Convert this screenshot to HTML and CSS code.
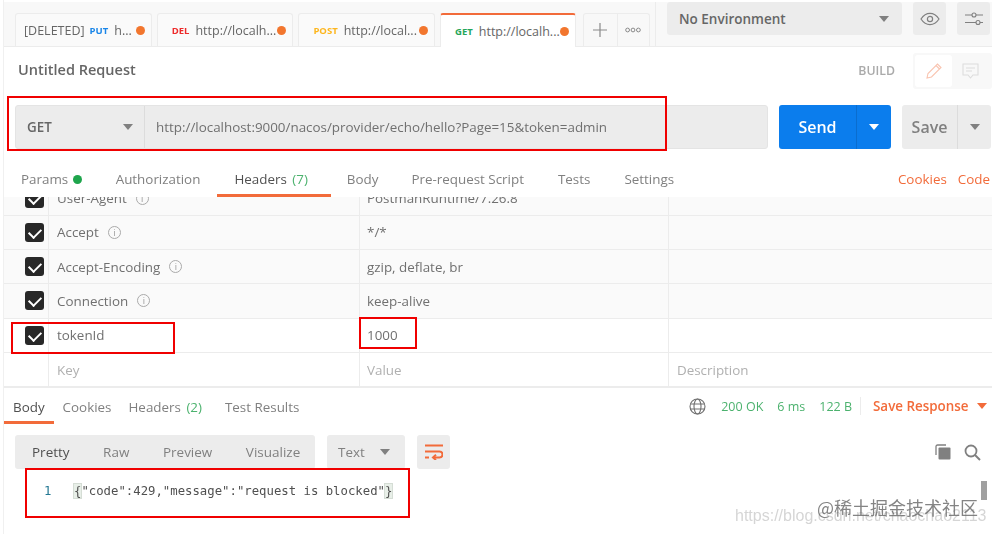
FILE: index.html
```html
<!DOCTYPE html>
<html lang="en">
<head>
    <meta charset="UTF-8" />
    <meta name="viewport" content="width=device-width, initial-scale=1.0" />
    <title>Postman</title>
    <link rel="stylesheet" href="styles.css">
</head>
<body>
    <div class="app">
        <div class="topbar">
            <div class="tabs">
                <div class="tab"><span class="tab-text">[DELETED]</span><b class="verb put">PUT</b><span class="tab-url">h...</span><i class="dot"></i></div>
                <div class="tab centered"><b class="verb del">DEL</b><span class="tab-url">http://localh...</span><i class="dot"></i></div>
                <div class="tab centered"><b class="verb post">POST</b><span class="tab-url">http://local...</span><i class="dot"></i></div>
                <div class="tab centered active"><b class="verb get">GET</b><span class="tab-url">http://localh...</span><i class="dot"></i></div>
                <div class="tab-actions">
                    <div class="tab-action">
                        <svg width="14" height="14" viewBox="0 0 14 14"><path d="M7 0v14M0 7h14" stroke="#8a8a8a" stroke-width="1.200" fill="none"/></svg>
                    </div>
                    <div class="tab-action">
                        <svg width="16" height="6" viewBox="0 0 16 6"><g stroke="#8a8a8a" fill="none"><circle cx="2.600" cy="3" r="1.900"/><circle cx="8" cy="3" r="1.900"/><circle cx="13.400" cy="3" r="1.900"/></g></svg>
                    </div>
                </div>
            </div>
            <div class="env">
                <div class="env-select"><span>No Environment</span><i class="caret"></i></div>
                <div class="env-btn">
                    <svg width="20" height="14" viewBox="0 0 20 14"><path d="M1 7c2.500-3.800 5.500-5.700 9-5.700s6.500 1.900 9 5.700c-2.500 3.800-5.500 5.700-9 5.700S3.500 10.800 1 7z" stroke="#808080" stroke-width="1.200" fill="none"/><circle cx="10" cy="7" r="2.600" stroke="#808080" stroke-width="1.200" fill="none"/></svg>
                </div>
                <div class="env-btn">
                    <svg width="20" height="14" viewBox="0 0 20 14"><g stroke="#808080" stroke-width="1.100" fill="none"><path d="M1 3h7M12 3h7M1 10.500h11M16 10.500h3"/><circle cx="10" cy="3" r="2"/><circle cx="14" cy="10.500" r="2"/></g></svg>
                </div>
            </div>
        </div>

        <div class="title-row">
            <h1>Untitled Request</h1>
            <span class="build">BUILD</span>
            <div class="mode-switch">
                <div class="mode on">
                    <svg width="18" height="18" viewBox="0 0 18 18"><path d="M2 16l1-4.500L12.500 2l3.500 3.500L6.500 15z M11 3.500l3.500 3.500" stroke="#f9c4b0" stroke-width="1.100" fill="none"/></svg>
                </div>
                <div class="mode">
                    <svg width="17" height="17" viewBox="0 0 17 17"><path d="M1 1h15v11h-5l-2.500 3-2.500-3H1z M4 5h9M4 8h6" stroke="#dcdcdc" stroke-width="1.100" fill="none"/></svg>
                </div>
            </div>
        </div>

        <div class="url-row">
            <div class="url-group">
                <div class="method"><span>GET</span><i class="caret"></i></div>
                <div class="url">http://localhost:9000/nacos/provider/echo/hello?Page=15&amp;token=admin</div>
            </div>
            <div class="send"><span>Send</span><div class="send-drop"><i class="caret white"></i></div></div>
            <div class="save"><span>Save</span><div class="save-drop"><i class="caret"></i></div></div>
        </div>

        <div class="req-tabs">
            <div class="req-tab params">Params <i class="green-dot"></i></div>
            <div class="req-tab auth">Authorization</div>
            <div class="req-tab selected">Headers <em>(7)</em></div>
            <div class="req-tab body-tab">Body</div>
            <div class="req-tab pre">Pre-request Script</div>
            <div class="req-tab tests">Tests</div>
            <div class="req-tab">Settings</div>
            <div class="req-links"><span>Cookies</span><span>Code</span></div>
        </div>

        <div class="table">
            <div class="row clipped">
                <div class="cell check"><i class="box"></i></div>
                <div class="cell key">User-Agent <i class="info">i</i></div>
                <div class="cell">PostmanRuntime/7.26.8</div>
                <div class="cell"></div>
            </div>
            <div class="row">
                <div class="cell check"><i class="box"></i></div>
                <div class="cell key">Accept <i class="info">i</i></div>
                <div class="cell">*/*</div>
                <div class="cell"></div>
            </div>
            <div class="row">
                <div class="cell check"><i class="box"></i></div>
                <div class="cell key">Accept-Encoding <i class="info">i</i></div>
                <div class="cell">gzip, deflate, br</div>
                <div class="cell"></div>
            </div>
            <div class="row">
                <div class="cell check"><i class="box"></i></div>
                <div class="cell key">Connection <i class="info">i</i></div>
                <div class="cell">keep-alive</div>
                <div class="cell"></div>
            </div>
            <div class="row plain">
                <div class="cell check"><i class="box"></i></div>
                <div class="cell key">tokenId</div>
                <div class="cell">1000</div>
                <div class="cell"></div>
            </div>
            <div class="row plain empty">
                <div class="cell check"></div>
                <div class="cell key">Key</div>
                <div class="cell">Value</div>
                <div class="cell">Description</div>
            </div>
        </div>

        <div class="res-bar">
            <div class="res-tab selected">Body</div>
            <div class="res-tab">Cookies</div>
            <div class="res-tab">Headers <em>(2)</em></div>
            <div class="res-tab">Test Results</div>
            <div class="res-status">
                <svg class="globe" width="17" height="17" viewBox="0 0 17 17"><g stroke="#707070" stroke-width="1.100" fill="none"><circle cx="8.500" cy="8.500" r="7.500"/><ellipse cx="8.500" cy="8.500" rx="3.500" ry="7.500"/><path d="M1.500 6h14M1.500 11h14"/></g></svg>
                <span>200 OK</span><span>6 ms</span><span>122 B</span>
                <div class="save-res">Save Response <i class="caret orange"></i></div>
            </div>
        </div>

        <div class="res-tools">
            <div class="format-tabs">
                <span class="on">Pretty</span><span>Raw</span><span>Preview</span><span>Visualize</span>
            </div>
            <div class="format-type"><span>Text</span><i class="caret"></i></div>
            <div class="wrap-btn">
                <svg width="18" height="16" viewBox="0 0 18 16"><g stroke="#f26b3a" stroke-width="2" fill="none"><path d="M0 1.500h18M0 7.500h14.500a3 3 0 0 1 0 6H8M0 13.500h4"/><path d="M11 10.800L8 13.500l3 2.500"/></g></svg>
            </div>
            <div class="res-icons">
                <svg width="16" height="16" viewBox="0 0 16 16"><path d="M1 11V2.500A1.500 1.500 0 0 1 2.500 1H11" stroke="#808080" stroke-width="1.300" fill="none"/><rect x="3.500" y="3.500" width="12" height="12" rx="1" fill="#808080"/></svg>
                <svg width="17" height="17" viewBox="0 0 17 17"><circle cx="7" cy="7" r="5.500" stroke="#808080" stroke-width="1.800" fill="none"/><path d="M11 11l5 5" stroke="#808080" stroke-width="2" fill="none"/></svg>
            </div>
        </div>

        <div class="code">
            <span class="line-no">1</span>
            <span class="code-text"><mark>{</mark>"code":429,"message":"request is blocked"<mark>}</mark></span>
        </div>
    </div>

    <div class="scroll-thumb"></div>
    <div class="mark-url">https://blog.csdn.net/chaochao2113</div>
    <div class="mark-site">@稀土掘金技术社区</div>

    <div class="redbox rb-url"></div>
    <div class="redbox rb-key"></div>
    <div class="redbox rb-val"></div>
    <div class="redbox rb-code"></div>
</body>
</html>
```

FILE: styles.css
```css
* {
    margin: 0;
    padding: 0;
    box-sizing: border-box;
}

body {
    font-family: "Open Sans", "Noto Sans", sans-serif;
    background: white;
    color: #666;
    width: 995px;
    height: 534px;
    overflow: hidden;
    position: relative;
    font-size: 13.4px;
}

i, em {
    font-style: normal;
}

.app {
    margin-left: 3px;
    width: 992px;
    height: 534px;
    padding-top: 2px;
    border-left: 1px solid #f0f0f0;
    filter: blur(0.35px);
}

/* top bar */
.topbar {
    display: flex;
    height: 45px;
    background: #f8f8f8;
    width: 988px;
    border-bottom: 1px solid #ececec;
}

.tabs {
    display: flex;
    align-items: flex-end;
    padding-left: 11px;
    width: 652px;
    border-right: 1px solid #ececec;
}

.tab {
    width: 136.700px;
    height: 33px;
    margin-right: 5px;
    padding-left: 8px;
    padding-top: 1px;
    background: #fafafa;
    border: 1px solid #ececec;
    border-bottom: none;
    border-radius: 3px 3px 0 0;
    display: flex;
    align-items: center;
    font-size: 12.500px;
    white-space: nowrap;
}

.tab.centered {
    padding-left: 14px;
}

.tab.active {
    background: white;
    border-top: 2px solid #f26b3a;
    width: 136px;
    height: 34px;
    margin-right: 7px;
    position: relative;
    margin-bottom: -1px;
}

.tab-text {
    margin-right: 5px;
}

.verb {
    font-size: 9.500px;
    font-weight: 700;
    margin-right: 6px;
}

.put { color: #1a86e8; }
.del { color: #ed2b2b; }
.post { color: #fdb61e; }
.get { color: #26a65b; }

.tab-url {
    flex: 1;
}

.dot {
    width: 9px;
    height: 9px;
    border-radius: 50%;
    background: #f2762e;
    margin-right: 6px;
}

.tab-actions {
    display: flex;
    height: 33px;
    border: 1px solid #ececec;
    border-bottom: none;
    border-radius: 3px 3px 0 0;
}

.tab-action {
    width: 32.500px;
    display: flex;
    align-items: center;
    justify-content: center;
}

.tab-action + .tab-action {
    border-left: 1px solid #ececec;
}

.env {
    display: flex;
    gap: 11px;
    margin-left: 11px;
    height: 33px;
}

.env-select {
    width: 235px;
    background: #ececec;
    border-radius: 3px;
    display: flex;
    align-items: center;
    justify-content: space-between;
    padding: 0 13px 0 12px;
    font-size: 13.500px;
    font-weight: 600;
    color: #666;
}

.env-btn {
    width: 33px;
    background: #ececec;
    border-radius: 3px;
    display: flex;
    align-items: center;
    justify-content: center;
}

.caret {
    display: inline-block;
    width: 0;
    height: 0;
    border-left: 5px solid transparent;
    border-right: 5px solid transparent;
    border-top: 6px solid #808080;
}

.caret.white { border-top-color: white; }
.caret.orange { border-top-color: #f26b3a; }

/* title */
.title-row {
    display: flex;
    align-items: center;
    height: 50px;
    padding: 0 0 6px 14px;
    width: 988px;
}

.title-row h1 {
    font-size: 14.500px;
    font-weight: 600;
    color: #666;
    flex: 1;
}

.build {
    font-size: 12.300px;
    font-weight: 600;
    color: #aaa;
    margin-right: 18px;
    padding-top: 3px;
}

.mode-switch {
    display: flex;
    width: 79px;
    height: 36px;
    margin-top: 4px;
    background: #f8f8f8;
    border-radius: 3px;
    padding: 2px;
}

.mode {
    width: 37px;
    display: flex;
    align-items: center;
    justify-content: center;
}

.mode.on {
    background: white;
    border-radius: 3px;
}

/* url row */
.url-row {
    display: flex;
    margin-top: 8px;
    padding-left: 11px;
    height: 44px;
}

.url-group {
    width: 753px;
    display: flex;
    background: #ececec;
    border: 1px solid #e4e4e4;
    border-radius: 3px;
    font-size: 13.400px;
}

.method {
    width: 129px;
    display: flex;
    align-items: center;
    justify-content: space-between;
    padding: 0 11px;
    border-right: 1px solid #dcdcdc;
    font-weight: 600;
}

.url {
    flex: 1;
    display: flex;
    align-items: center;
    padding-left: 11px;
    color: #707070;
}

.send {
    width: 112px;
    margin-left: 11px;
    background: #0b7ded;
    border-radius: 3px;
    display: flex;
    align-items: center;
    color: white;
    font-size: 16px;
    font-weight: 600;
}

.send span {
    width: 77px;
    text-align: center;
}

.send-drop {
    flex: 1;
    height: 100%;
    display: flex;
    align-items: center;
    justify-content: center;
    border-left: 1px solid #0a6dcf;
}

.save {
    width: 89px;
    margin-left: 11px;
    background: #ececec;
    border-radius: 3px;
    display: flex;
    align-items: center;
    font-size: 16px;
    font-weight: 600;
    color: #808080;
}

.save span {
    width: 55px;
    text-align: center;
}

.save-drop {
    flex: 1;
    height: 100%;
    display: flex;
    align-items: center;
    justify-content: center;
    border-left: 1px solid #dcdcdc;
}

/* request tabs */
.req-tabs {
    display: flex;
    height: 48px;
    padding: 21px 2px 0 17px;
    width: 988px;
    color: #808080;
}

.req-tab {
    height: 27px;
    margin-right: 34px;
    white-space: nowrap;
    position: relative;
}

.req-tab.auth { margin-right: 34px; }
.req-tab.body-tab { margin-right: 33px; }

.req-tab.selected {
    color: #505050;
    margin-right: 39px;
}

.req-tab.selected::after {
    content: '';
    position: absolute;
    left: -17px;
    right: -23px;
    bottom: 0;
    height: 3px;
    background: #f26b3a;
}

.req-tab.selected em, .res-tab em {
    color: #4cb26e;
    margin-left: 2px;
}

.green-dot {
    display: inline-block;
    width: 9px;
    height: 9px;
    border-radius: 50%;
    background: #1ea54c;
    margin-left: 1px;
}

.req-links {
    margin-left: auto;
    display: flex;
    gap: 11px;
    color: #f26b3a;
}

/* headers table */
.table {
    height: 191px;
    overflow: hidden;
    width: 988px;
    border-bottom: 2px solid #ececec;
}

.row {
    display: grid;
    grid-template-columns: 45px 311px 309px 1fr;
    height: 34.300px;
    background: #fafafa;
    border-bottom: 1px solid #ececec;
}

.row.clipped {
    margin-top: -15.600px;
}

.row.plain {
    background: white;
}

.cell {
    display: flex;
    align-items: center;
    padding-left: 8px;
    border-right: 1px solid #ececec;
    color: #707070;
    white-space: nowrap;
}

.cell:nth-child(3) {
    padding-left: 7px;
}

.cell:last-child {
    border-right: none;
}

.check {
    padding-left: 21px;
}

.box {
    display: block;
    width: 19px;
    height: 19px;
    background: #282828;
    border-radius: 3px;
    position: relative;
}

.box::after {
    content: '';
    position: absolute;
    left: 6px;
    top: 3px;
    width: 6px;
    height: 10px;
    border: solid white;
    border-width: 0 2.500px 2.500px 0;
    transform: rotate(45deg);
}

.info {
    display: inline-flex;
    width: 13px;
    height: 13px;
    margin-left: 9px;
    border: 1px solid #aaa;
    border-radius: 50%;
    font-size: 9px;
    line-height: 1;
    align-items: center;
    justify-content: center;
    color: #999;
}

.row.empty .cell {
    color: #b0b0b0;
}

/* response */
.res-bar {
    display: flex;
    height: 36px;
    width: 988px;
    align-items: stretch;
    padding-left: 9px;
    color: #808080;
}

.res-tab {
    margin-right: 17px;
    padding-top: 10px;
    position: relative;
    white-space: nowrap;
}

.res-tab.selected {
    margin-right: 18px;
}

.res-tab:nth-child(3) {
    margin-right: 23px;
}

.res-tab.selected {
    color: #505050;
}

.res-tab.selected::after {
    content: '';
    position: absolute;
    left: -9px;
    right: -9px;
    bottom: 0;
    height: 3px;
    background: #f26b3a;
}

.res-status {
    margin-left: auto;
    display: flex;
    align-items: center;
    height: 36px;
    padding-right: 5px;
    color: #4cb26e;
    font-size: 12.500px;
    white-space: nowrap;
}

.res-status span {
    margin-right: 14px;
}

.res-status span:last-of-type {
    margin-right: 8px;
}

.globe {
    margin-right: 15px;
}

.save-res {
    border-left: 1px solid #ececec;
    padding-left: 12px;
    color: #f26b3a;
    font-weight: 600;
    font-size: 13.400px;
}

.save-res .caret {
    margin-left: 5px;
    vertical-align: 2px;
}

.res-tools {
    display: flex;
    align-items: center;
    margin-top: 11px;
    padding-left: 11px;
    height: 34px;
    width: 988px;
    color: #808080;
}

.format-tabs {
    width: 300px;
    height: 100%;
    background: #ececec;
    border-radius: 3px;
    display: flex;
    align-items: center;
    padding-left: 17px;
    gap: 33.500px;
    font-size: 13.500px;
}

.format-tabs span {
    white-space: nowrap;
}

.format-tabs .on {
    color: #505050;
}

.format-type {
    width: 78px;
    height: 100%;
    margin-left: 12px;
    background: #ececec;
    border-radius: 3px;
    display: flex;
    align-items: center;
    justify-content: space-between;
    padding: 0 15px 0 11px;
}

.wrap-btn {
    width: 33px;
    height: 100%;
    margin-left: 12px;
    background: #ececec;
    border-radius: 3px;
    display: flex;
    align-items: center;
    justify-content: center;
}

.res-icons {
    margin-left: auto;
    display: flex;
    gap: 13px;
    padding-right: 11px;
    padding-top: 1px;
}

.code {
    display: flex;
    align-items: center;
    margin-top: 10px;
    height: 24px;
    font-family: "DejaVu Sans Mono", monospace;
    font-size: 12.300px;
    color: #505050;
}

.line-no {
    width: 70px;
    padding-left: 40px;
    color: #237893;
}

.code-text {
    white-space: pre;
}

.code-text mark {
    background: #e8efe8;
    color: #505050;
    outline: 1px solid #d5ddd5;
}

/* things lying over the picture */
.scroll-thumb {
    position: absolute;
    left: 981px;
    top: 481px;
    width: 6px;
    height: 19px;
    background: #a0a0a0;
}

.mark-url {
    position: absolute;
    left: 735px;
    top: 507px;
    font-family: "Liberation Sans", sans-serif;
    font-size: 16px;
    color: rgba(150, 150, 150, 0.4);
    white-space: nowrap;
}

.mark-site {
    position: absolute;
    left: 817px;
    top: 494px;
    font-family: "Noto Sans CJK SC", sans-serif;
    font-size: 18px;
    color: rgba(110, 110, 110, 0.85);
    white-space: nowrap;
}

.redbox {
    position: absolute;
    border: 2px solid #f00000;
}

.rb-url { left: 7px; top: 96px; width: 660px; height: 55px; }
.rb-key { left: 11px; top: 322px; width: 164px; height: 32px; }
.rb-val { left: 359px; top: 317px; width: 58px; height: 32px; }
.rb-code { left: 25px; top: 468px; width: 385px; height: 50px; }
```
